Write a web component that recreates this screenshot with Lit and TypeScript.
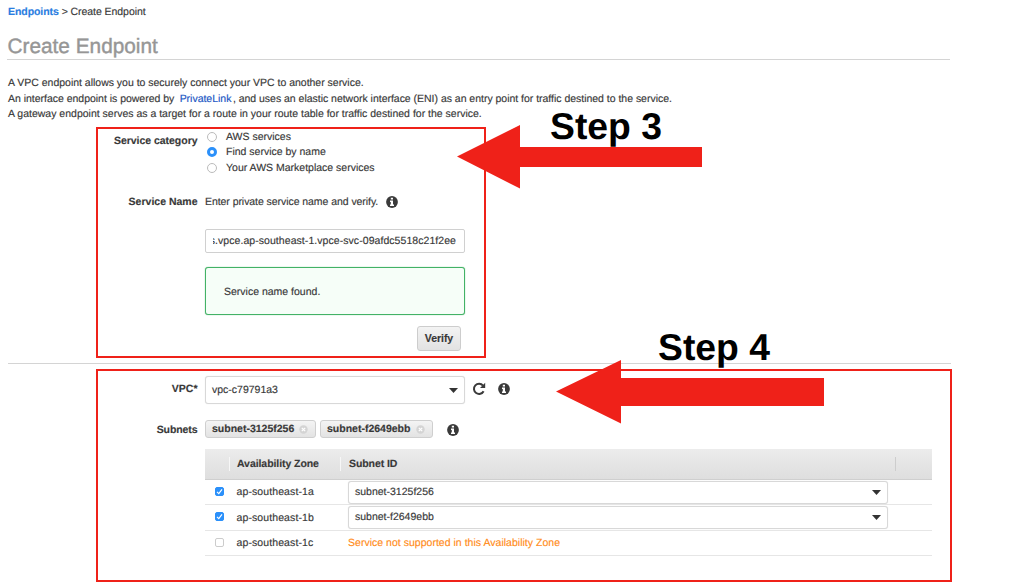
import { LitElement, html, css } from "lit";
import { customElement, property } from "lit/decorators.js";

@customElement("info-icon")
class InfoIcon extends LitElement {
  static styles = css`
    :host { display: block; width: 12px; height: 12px; }
    svg { display: block; }
  `;
  render() {
    return html`<svg width="12" height="12" viewBox="0 0 12 12">
      <circle cx="6" cy="6" r="5.9" fill="#3a3a3a" />
      <path d="M4.800 1.800h2.200v1.800H4.800zM4 4.600h3v4h1v1.500H4V8.600h.8V6H4z" fill="#fff" />
    </svg>`;
  }
}

@customElement("drop-field")
class DropField extends LitElement {
  @property() value = "";
  static styles = css`
    :host {
      display: flex; align-items: center; justify-content: space-between;
      box-sizing: border-box; border: 1px solid #d8d8d8; border-radius: 3px;
      background: #fff; padding: 0 6px 0 6px; box-shadow: 0 0 1px #ddd;
    }
    span { padding-top: 1px; }
    svg { display: block; }
  `;
  render() {
    return html`<span>${this.value}</span>
      <svg width="9" height="5" viewBox="0 0 9 5"><path d="M0 0h9L4.5 5z" fill="#333" /></svg>`;
  }
}

const zones = [
  { zone: "ap-southeast-1a", subnet: "subnet-3125f256" },
  { zone: "ap-southeast-1b", subnet: "subnet-f2649ebb" },
  { zone: "ap-southeast-1c", subnet: "" },
];
const categories = ["AWS services", "Find service by name", "Your AWS Marketplace services"];

@customElement("app-root")
class AppRoot extends LitElement {
  static styles = css`
    :host {
      display: block; position: relative; width: 1024px; height: 583px; overflow: hidden;
      background: #fff; color: #383838; box-sizing: border-box; padding-left: 8px;
      font: 10.5px/15.5px "Liberation Sans", Arial, sans-serif; white-space: nowrap;
      text-rendering: geometricPrecision; -webkit-text-stroke: 0.15px currentColor;
    }
    .crumbs { height: 19px; padding-top: 5px; box-sizing: border-box; letter-spacing: -0.06px; }
    .crumbs b { color: #2a7de1; }
    h1 {
      margin: 0; width: 943px; height: 41px; box-sizing: border-box; padding-top: 16px;
      font-size: 20.8px; line-height: 24px; font-weight: 400; color: #969696;
      border-bottom: 1px solid #d4d4d4; margin-left: -1px; padding-left: 0.5px;
      -webkit-text-stroke: 0.4px currentColor;
    }
    .intro { padding-top: 16px; height: 68px; box-sizing: border-box; }
    .intro .eni { letter-spacing: -0.02px; }
    .intro .vpce { letter-spacing: -0.013px; }
    .intro a { color: #1a55c4; margin: 0 1.5px 0 2.5px; }
    .service { height: 235px; width: 943px; border-bottom: 1px solid #d4d4d4; }
    .row { display: grid; grid-template-columns: 189.5px 1fr; column-gap: 7.5px; }
    .label { font-weight: 700; text-align: right; }
    .categories { height: 65px; }
    .categories .label { padding-top: 6px; letter-spacing: -0.03px; }
    .options { padding-top: 1px; }
    .option { display: flex; align-items: center; height: 15.6px; padding-left: 2px; }
    .option span { padding-top: 1.6px; }
    .radio {
      width: 10px; height: 10px; box-sizing: border-box; border: 1px solid #bbb;
      border-radius: 50%; margin-right: 9px; background: #fff;
    }
    .radio.on { border: 3.5px solid #2b90fa; }
    .name { height: 36px; align-items: start; padding-top: 2px; box-sizing: border-box; }
    .hint { display: flex; align-items: center; gap: 8px; letter-spacing: -0.06px; }
    .hint info-icon { margin-top: -1px; }
    .control { width: 260px; box-sizing: border-box; margin-left: 197px; }
    .input {
      height: 24px; border: 1px solid #d0d0d0; border-radius: 2px; padding: 1px 8px 0 7px;
      display: flex;
    }
    .clip {
      flex: 1; overflow: hidden; display: flex; justify-content: flex-end; align-items: center;
      letter-spacing: 0.06px;
    }
    .found {
      height: 48px; margin-top: 14px; border: 1px solid #43b266; border-radius: 3px;
      background: #f6fef8; padding: 16.5px 18px; box-shadow: 0 0 1px #43b266;
    }
    .actions { display: flex; justify-content: flex-end; padding: 11px 4px 0 0; }
    button {
      width: 44px; height: 25px; border: 1px solid #cdcdcd; border-radius: 3px; padding: 0;
      background: linear-gradient(#f3f3f3, #e2e2e2); color: #383838; font: inherit; font-weight: 700;
      letter-spacing: -0.05px;
    }
    .vpc { padding-top: 12px; height: 56px; box-sizing: border-box; }
    .vpc .label { padding-top: 6px; }
    .line { display: flex; align-items: flex-start; }
    .vpc drop-field { width: 260px; height: 28px; }
    .reload { margin: 6px 0 0 7px; }
    .vpc info-icon { margin: 6.5px 0 0 12px; }
    .subnets { height: 29px; }
    .subnets .label { padding-top: 3px; letter-spacing: -0.08px; }
    .chip {
      display: flex; align-items: center; justify-content: space-between; box-sizing: border-box;
      height: 18px; border: 1px solid #cfcfcf; border-radius: 3px; padding: 2px 7px 0 6px;
      background: linear-gradient(#f4f4f4, #e3e3e3); font-weight: 700; margin-right: 4px;
    }
    .chip svg { margin-top: -2px; }
    .chip.a { width: 111px; }
    .chip.b { width: 113px; }
    .subnets info-icon { margin: 3.5px 0 0 9.5px; }
    .table { width: 727px; margin-left: 197px; }
    .tr {
      display: grid; grid-template-columns: 25px 111px 554px 1fr; align-items: center;
      height: 25.3px; box-sizing: border-box; border-bottom: 1px solid #e6e6e6;
    }
    .th {
      height: 31px; font-weight: 700; background: linear-gradient(#ececec, #dedede);
      border-bottom: 1px solid #cfcfcf; grid-template-columns: 24px 111px 555px 1fr;
      letter-spacing: -0.07px;
    }
    .th span + span { border-left: 1px solid #cdcdcd; line-height: 14px; height: 14px; padding-left: 7px; }
    .th span:nth-child(2), .th span:nth-child(3) { border-color: #f7f7f7; }
    .th span:nth-child(3) { padding-left: 8px; }
    .check {
      width: 9px; height: 9px; box-sizing: border-box; border: 1px solid #ccc; border-radius: 2px;
      margin-left: 10px; margin-top: -1px; background: #fff;
    }
    .check.on { background: #2b90fa; border-color: #2b90fa; }
    .check svg { display: block; margin: -1px; }
    .zone { padding-left: 6.5px; letter-spacing: 0.1px; padding-top: 2px; }
    .tr drop-field { width: 540px; height: 23px; margin-left: 7px; }
    .warn { color: #ff8c1a; padding-left: 7px; padding-top: 2px; letter-spacing: 0.02px; }
    .marks { position: absolute; left: 0; top: 0; }
    .step {
      position: absolute; font-size: 37.3px; line-height: 42px; font-weight: 700; color: #000;
      -webkit-text-stroke: 0;
    }
    .three { left: 550px; top: 105px; }
    .four { left: 658px; top: 326px; }
  `;

  chip(text: string, kind: string) {
    return html`<span class="chip ${kind}">${text}
      <svg width="9" height="9" viewBox="0 0 9 9"><circle cx="4.5" cy="4.5" r="4.2" fill="#d4d4d4" />
        <path d="M2.800 2.800l3.400 3.400M6.200 2.800L2.800 6.200" stroke="#fff" stroke-width="1.2" /></svg></span>`;
  }

  render() {
    return html`
      <div class="crumbs"><b>Endpoints</b> &gt; Create Endpoint</div>
      <h1>Create Endpoint</h1>
      <div class="intro">
        <div class="vpce">A VPC endpoint allows you to securely connect your VPC to another service.</div>
        <div class="eni">An interface endpoint is powered by <a>PrivateLink</a>, and uses an elastic network interface (ENI) as an entry point for traffic destined to the service.</div>
        <div>A gateway endpoint serves as a target for a route in your route table for traffic destined for the service.</div>
      </div>
      <section class="service">
        <div class="row categories">
          <div class="label">Service category</div>
          <div class="options">
            ${categories.map((c, i) => html`<div class="option"><i class="radio ${i === 1 ? "on" : ""}"></i><span>${c}</span></div>`)}
          </div>
        </div>
        <div class="row name">
          <div class="label">Service Name</div>
          <div class="hint">Enter private service name and verify.<info-icon></info-icon></div>
        </div>
        <div class="control input"><div class="clip"><span>s.vpce.ap-southeast-1.vpce-svc-09afdc5518c21f2ee</span></div></div>
        <div class="control found">Service name found.</div>
        <div class="control actions"><button>Verify</button></div>
      </section>
      <section>
        <div class="row vpc">
          <div class="label">VPC*</div>
          <div class="line">
            <drop-field value="vpc-c79791a3"></drop-field>
            <svg class="reload" width="14" height="14" viewBox="0 0 14 14">
              <path d="M11.600 9.200A5.100 5.100 0 1 1 11 3.600" fill="none" stroke="#3a3a3a" stroke-width="2" />
              <path d="M13.200 .8v5.200H8z" fill="#3a3a3a" />
            </svg>
            <info-icon></info-icon>
          </div>
        </div>
        <div class="row subnets">
          <div class="label">Subnets</div>
          <div class="line">
            ${this.chip("subnet-3125f256", "a")}${this.chip("subnet-f2649ebb", "b")}
            <info-icon></info-icon>
          </div>
        </div>
        <div class="table">
          <div class="tr th"><span></span><span>Availability Zone</span><span>Subnet ID</span><span></span></div>
          ${zones.map((z) => html`<div class="tr">
            <i class="check ${z.subnet ? "on" : ""}">${z.subnet
              ? html`<svg width="9" height="9" viewBox="0 0 9 9"><path d="M2 4.8l1.8 1.8L7 2.4" fill="none" stroke="#fff" stroke-width="1.2" /></svg>`
              : ""}</i>
            <span class="zone">${z.zone}</span>
            ${z.subnet
              ? html`<drop-field value=${z.subnet}></drop-field>`
              : html`<span class="warn">Service not supported in this Availability Zone</span>`}
            <span></span>
          </div>`)}
        </div>
      </section>
      <svg class="marks" width="1024" height="583">
        <g fill="none" stroke="#ef2119" stroke-width="2">
          <rect x="97" y="128" width="388" height="229" />
          <rect x="97" y="370" width="854" height="211" />
        </g>
        <g fill="#ef2119">
          <path d="M457 156.500L520 125v22h182v20H520v21.500z" />
          <path d="M556 391.500L621 360v18h203v28H621v17.500z" />
        </g>
      </svg>
      <div class="step three">Step 3</div>
      <div class="step four">Step 4</div>
    `;
  }
}
